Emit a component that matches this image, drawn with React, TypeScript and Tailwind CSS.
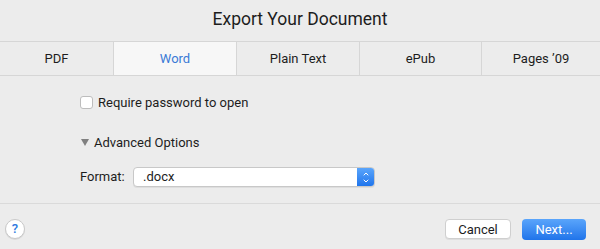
import { ChevronDown, ChevronUp } from "lucide-react";

const tabs = ["PDF", "Word", "Plain Text", "ePub", "Pages \u201909"];

export default function App() {
  return (
    <div
      className="flex h-[249px] w-[600px] flex-col bg-[#ececec] text-[#1d1d1d]"
      style={{ fontFamily: "Roboto, 'Liberation Sans', sans-serif" }}
    >
      <div className="flex h-[41px] items-center justify-center pb-[1px] text-[17.5px] leading-none">
        Export Your Document
      </div>

      <div className="grid h-[35px] grid-cols-[113px_123px_123px_122px_1fr] border-y border-[#d6d6d6]">
        {tabs.map((t, i) => (
          <div
            key={t}
            className={`flex items-center justify-center text-[13px] ${
              i > 0 ? "border-l border-[#d6d6d6]" : ""
            } ${i === 1 ? "bg-[#f7f7f7] text-[#3a7ad6]" : ""}`}
          >
            {t}
          </div>
        ))}
      </div>

      <div className="flex flex-1 flex-col pl-[80px] text-[13px]">
        <label className="mt-[17px] flex items-center gap-[5px]">
          <span className="h-[13px] w-[13px] rounded-[3px] border border-[#bdbdbd] bg-white" />
          Require password to open
        </label>

        <div className="mt-[20px] flex items-center gap-[5px]">
          <svg width="8" height="7" viewBox="0 0 8 7" className="ml-[1px]">
            <path d="M0 0 H8 L4 7 Z" fill="#808080" />
          </svg>
          <span>Advanced Options</span>
        </div>

        <div className="mt-[15px] flex items-center">
          <span className="w-[53px]">Format:</span>
          <div className="flex h-[20px] w-[242px] items-stretch overflow-hidden rounded-[4px] border border-[#c8c8c8] bg-white shadow-[0_1px_0_rgba(0,0,0,0.06)]">
            <span className="flex flex-1 items-center pl-[9px]">.docx</span>
            <span className="flex w-[17px] flex-col items-center justify-center bg-gradient-to-b from-[#5aa5fb] to-[#1e75ec] text-white">
              <ChevronUp size={8} strokeWidth={3} className="-mb-[1px]" />
              <ChevronDown size={8} strokeWidth={3} />
            </span>
          </div>
        </div>
      </div>

      <div className="flex h-[46px] items-start border-t border-[#dadada] pl-[5px] pr-[14px] pt-[15px] text-[13px]">
        <div className="flex h-[20px] w-[20px] items-center justify-center rounded-full border border-[#c8c8c8] bg-white text-[13px] font-medium text-[#2f7be0] shadow-[0_1px_0_rgba(0,0,0,0.08)]">
          ?
        </div>
        <div className="ml-auto flex gap-[11px]">
          <button className="h-[20px] w-[66px] rounded-[4px] border border-[#cfcfcf] bg-white leading-none shadow-[0_1px_0_rgba(0,0,0,0.06)]">
            Cancel
          </button>
          <button className="h-[21px] w-[64px] rounded-[4px] bg-gradient-to-b from-[#5aa5fb] to-[#1f74ea] leading-none text-white">
            Next...
          </button>
        </div>
      </div>
    </div>
  );
}
